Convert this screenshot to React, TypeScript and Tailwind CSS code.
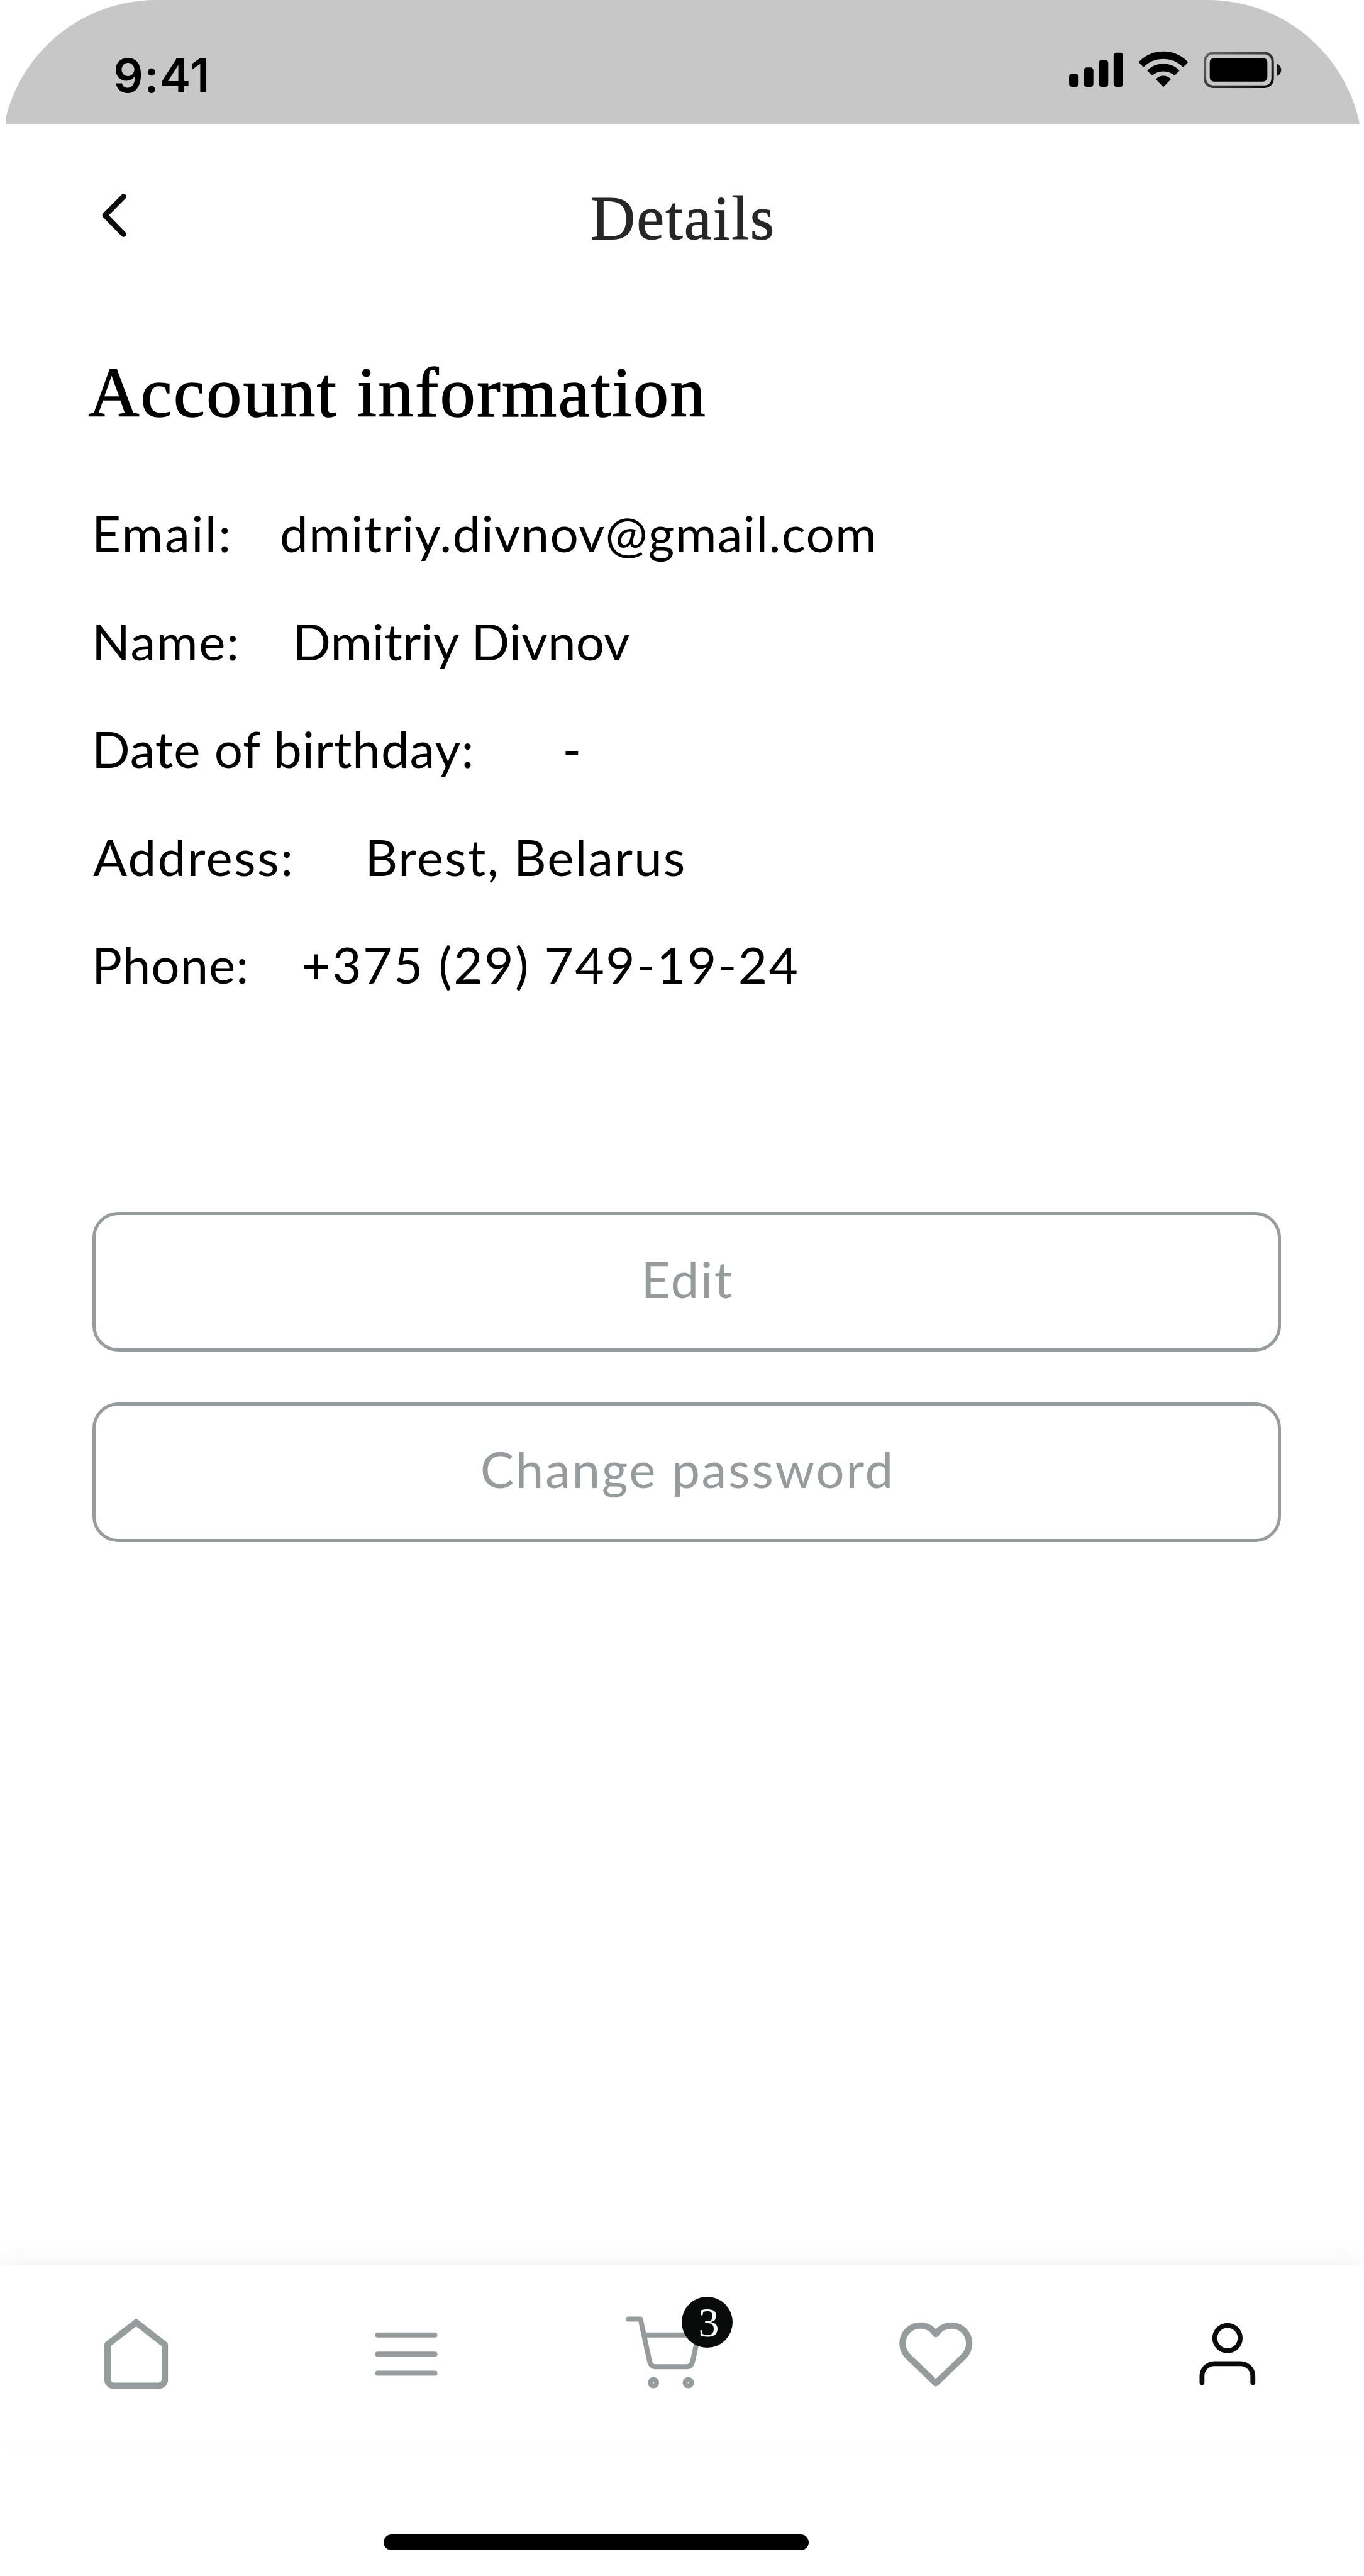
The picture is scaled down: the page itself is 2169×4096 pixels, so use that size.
import React from 'react';

type Detail = {
  label: string;
  value: string;
  labelClass: string;
  valueClass: string;
};

const details: Detail[] = [
  { label: 'Email:', value: 'dmitriy.divnov@gmail.com', labelClass: 'w-[299px] tracking-[2.5px]', valueClass: 'tracking-[1.29px]' },
  { label: 'Name:', value: 'Dmitriy Divnov', labelClass: 'w-[319.3px] tracking-[1.6px]', valueClass: 'tracking-[0.3px]' },
  { label: 'Date of birthday:', value: '-', labelClass: 'w-[748.5px] tracking-[0.9px]', valueClass: '' },
  { label: 'Address:', value: 'Brest, Belarus', labelClass: 'w-[434.5px] pl-0.5 tracking-[2.3px]', valueClass: 'tracking-[2px]' },
  { label: 'Phone:', value: '+375 (29) 749-19-24', labelClass: 'w-[333.5px] tracking-[0.9px]', valueClass: 'tracking-[2.4px]' },
];

function StatusIcons() {
  return (
    <svg viewBox="2016 92 412 80" className="mt-[77.3px] h-[67.3px] w-[346.4px]">
      <defs>
        <linearGradient id="battery-outline" x1="0" y1="0" x2="1" y2="1">
          <stop offset="0" stopColor="#666666" />
          <stop offset="0.55" stopColor="#333333" />
          <stop offset="1" stopColor="#0c0c0c" />
        </linearGradient>
      </defs>
      <rect x="2022" y="140" width="18" height="24.7" rx="5.5" />
      <rect x="2050" y="128" width="18" height="36.7" rx="5.5" />
      <rect x="2078" y="114" width="18" height="50.7" rx="5.5" />
      <rect x="2106.2" y="100" width="18" height="64.7" rx="5.5" />
      <g stroke="#000" strokeWidth="2" strokeLinejoin="round">
        <path d="M2154.7 118A63 63 0 0 1 2245.7 118L2237.7 126A54.5 54.5 0 0 0 2162.7 126Z" />
        <path d="M2171 133.7A42 42 0 0 1 2229.5 133.7L2221.5 141.8A34 34 0 0 0 2179 141.8Z" />
        <path d="M2187.3 150.3A18 18 0 0 1 2213.3 150.3L2200.3 163.6Z" />
      </g>
      <rect x="2279" y="101" width="128" height="63.4" rx="15" fill="none" stroke="url(#battery-outline)" strokeWidth="4.8" />
      <rect x="2288" y="110" width="109" height="44.7" rx="8" />
      <path d="M2415 121C2426 125.5 2426 139.8 2415 144.3Z" fill="#111" />
    </svg>
  );
}

function StatusBar() {
  return (
    <header className="ml-[10.1px] h-[196.7px] overflow-hidden">
      <div className="-ml-[8.4px] flex h-[420px] w-[2165.5px] items-start justify-between rounded-t-[246.3px] bg-[#c7c7c7] pr-[125.8px] pl-[178.6px]">
        <span className="mt-[69.8px] font-[Inter,sans-serif] text-[74.4px] leading-[100px] font-semibold tracking-[1.1px] text-black">
          9:41
        </span>
        <StatusIcons />
      </div>
    </header>
  );
}

function TitleBar() {
  return (
    <div className="grid h-[296.4px] grid-cols-3 items-center">
      <svg viewBox="188 362 56 92" className="-mt-1 ml-[158.1px] h-[77.3px] w-[47.1px]">
        <path d="M233.8 372.2L198.7 407.7L233.8 443.5" fill="none" stroke="#090b0a" strokeWidth="10.3" strokeLinecap="round" strokeLinejoin="round" />
      </svg>
      <h1 className="pt-1 pl-[3px] text-center font-['Liberation_Serif',serif] text-[99px] leading-[120px] tracking-[2px] text-[#262626] [-webkit-text-stroke:1px_#262626]">
        Details
      </h1>
    </div>
  );
}

function OutlineButton({ children }: { children: React.ReactNode }) {
  return (
    <button
      type="button"
      className="flex h-[222px] w-[1890.6px] items-center justify-center rounded-[41px] border-[5px] border-[#969c9d] pb-[10.4px] pl-[3px] text-[80px] leading-[100px] tracking-[2.6px] text-[#969c9d]"
    >
      {children}
    </button>
  );
}

function NavBar() {
  return (
    <nav className="flex h-[283.3px] bg-white pt-[47.5px] pl-[161.4px] shadow-[0_-14px_44px_rgba(0,0,0,0.035),0_-3px_8px_rgba(0,0,0,0.02)]">
      <svg viewBox="192 4340 132 184" className="h-[154.7px] w-[111px]" fill="none" stroke="#969c9d" strokeWidth="12.1" strokeLinejoin="round">
        <path d="M203.8 4434L258 4392L312.2 4434V4500A12 12 0 0 1 300.2 4512H215.8A12 12 0 0 1 203.8 4500Z" />
      </svg>
      <svg viewBox="704 4340 128 184" className="ml-[319.5px] h-[154.7px] w-[107.6px]" fill="none" stroke="#969c9d" strokeWidth="9.5" strokeLinecap="round">
        <path d="M714 4415.8H822.5M714 4452H822.5M714 4488H822.5" />
      </svg>
      <div className="relative ml-[292.6px] h-[154.7px] w-[176.6px]">
        <svg viewBox="1180 4340 210 184" className="h-[154.7px] w-[176.6px]" fill="none" stroke="#969c9d" strokeWidth="9.5" strokeLinecap="round" strokeLinejoin="round">
          <path d="M1188.5 4385.9H1211.5L1229 4467C1230.6 4472.6 1233.8 4475.8 1239.5 4475.8H1299.5C1305.2 4475.8 1308.4 4472.6 1309.8 4467L1321 4415.8H1218.5" />
          <circle cx="1236" cy="4506" r="6" />
          <circle cx="1302" cy="4506" r="6" />
        </svg>
        <span className="absolute top-[3.4px] left-[92.3px] flex h-[81px] w-[81px] items-center justify-center rounded-full bg-[#090b0a] pl-[4px] font-['Liberation_Serif',serif] text-[66px] leading-[81px] text-white">
          3
        </span>
      </div>
      <svg viewBox="1696 4340 148 184" className="ml-[257.3px] h-[154.7px] w-[124.4px]" fill="none" stroke="#969c9d" strokeWidth="12" strokeLinecap="round" strokeLinejoin="round">
        <path d="M1770 4414C1763.5 4404 1752.5 4398 1740.3 4398C1721.8 4398 1707 4413 1707 4431.5C1707 4441 1710.8 4449.6 1717 4456L1770 4507L1823 4456C1829.2 4449.6 1833 4441 1833 4431.5C1833 4413 1818.2 4398 1799.7 4398C1787.5 4398 1776.5 4404 1770 4414Z" />
      </svg>
      <svg viewBox="2264 4340 116 184" className="ml-[353.1px] h-[154.7px] w-[97.5px]" fill="none" stroke="#090b0a" strokeWidth="9.3" strokeLinecap="round">
        <circle cx="2322.2" cy="4421.8" r="24" />
        <path d="M2274 4505.8V4493.5A23.5 23.5 0 0 1 2297.5 4470H2346.7A23.5 23.5 0 0 1 2370.2 4493.5V4505.8" />
      </svg>
    </nav>
  );
}

export default function App() {
  return (
    <div className="flex h-[4096px] w-[2169px] flex-col overflow-hidden bg-white font-[Lato,sans-serif] text-black">
      <StatusBar />
      <main className="h-[3404.6px]">
        <TitleBar />
        <h2 className="mt-[66.4px] ml-[140.4px] font-['Liberation_Serif',serif] text-[112px] leading-[130px] tracking-[2.5px] [-webkit-text-stroke:1.6px_#000]">
          Account information
        </h2>
        <dl className="mt-[71.9px] ml-[146px] text-[80px]">
          {details.map((d) => (
            <div key={d.label} className="flex h-[171.5px] items-center leading-[100px] whitespace-nowrap">
              <dt className={d.labelClass}>{d.label}</dt>
              <dd className={d.valueClass}>{d.value}</dd>
            </div>
          ))}
        </dl>
        <div className="mt-[308px] ml-[146.5px] flex flex-col gap-[80.7px]">
          <OutlineButton>Edit</OutlineButton>
          <OutlineButton>Change password</OutlineButton>
        </div>
      </main>
      <NavBar />
      <div className="mt-[145.7px] ml-[610.2px] h-[25px] w-[676px] rounded-full bg-black" />
    </div>
  );
}
